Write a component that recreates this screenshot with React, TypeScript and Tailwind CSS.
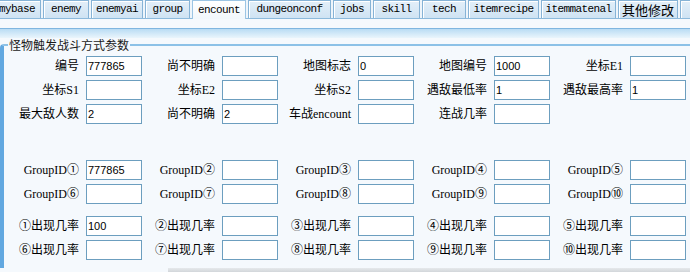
import React from "react";

const tabs: { t: string; w: number; active?: boolean; cjk?: boolean }[] = [
  { t: "mybase", w: 48 },
  { t: "enemy", w: 46 },
  { t: "enemyai", w: 52 },
  { t: "group", w: 45 },
  { t: "encount", w: 54, active: true },
  { t: "dungeonconf", w: 83 },
  { t: "jobs", w: 38 },
  { t: "skill", w: 47 },
  { t: "tech", w: 44 },
  { t: "itemrecipe", w: 71 },
  { t: "itemmatenal", w: 75 },
  { t: "其他修改", w: 60, cjk: true },
  { t: "", w: 40 },
];

type Cell = [string, string] | null;

const sec1: Cell[][] = [
  [["编号", "777865"], ["尚不明确", ""], ["地图标志", "0"], ["地图编号", "1000"], ["坐标E1", ""]],
  [["坐标S1", ""], ["坐标E2", ""], ["坐标S2", ""], ["遇敌最低率", "1"], ["遇敌最高率", "1"]],
  [["最大敌人数", "2"], ["尚不明确", "2"], ["车战encount", ""], ["连战几率", ""], null],
];

const circ = ["①", "②", "③", "④", "⑤", "⑥", "⑦", "⑧", "⑨", "⑩"];

const sec2: Cell[][] = [
  circ.slice(0, 5).map((c, i) => ["GroupID" + c, i === 0 ? "777865" : ""] as [string, string]),
  circ.slice(5).map((c) => ["GroupID" + c, ""] as [string, string]),
];

const sec3: Cell[][] = [
  circ.slice(0, 5).map((c, i) => [c + "出现几率", i === 0 ? "100" : ""] as [string, string]),
  circ.slice(5).map((c) => [c + "出现几率", ""] as [string, string]),
];

function Row({ cells }: { cells: Cell[] }) {
  return (
    <div className="grid grid-cols-[repeat(5,136px)] h-[20px]">
      {cells.map((c, i) =>
        c ? (
          <div key={i} className="flex items-center">
            <div className="w-[80px] pr-[7px] text-right text-[12px] leading-[20px] text-black whitespace-nowrap [font-family:'Liberation_Serif','Noto_Sans_CJK_SC',serif]">
              {c[0]}
            </div>
            <div className="w-[56px] h-[20px] border border-[#6c9ebf] bg-white pl-[1px] text-[11px] leading-[18px] text-black [font-family:'Liberation_Sans',sans-serif]">
              {c[1]}
            </div>
          </div>
        ) : (
          <div key={i} />
        )
      )}
    </div>
  );
}

export default function App() {
  return (
    <div className="w-[690px] h-[272px] overflow-hidden bg-[#f5f9fd] flex flex-col">
      {/* tab bar */}
      <div className="h-[19px] flex gap-[2px] -ml-[7px] border-b border-[#8dbadc] bg-[#eef5fb] shrink-0">
        {tabs.map((tb, i) => (
          <div
            key={i}
            style={{ width: tb.w }}
            className={
              "shrink-0 h-[18px] flex items-center justify-center border border-b-0 text-black whitespace-nowrap " +
              (tb.active
                ? "bg-gradient-to-b from-[#ffffff] to-[#f1f7fc] border-[#9cc5e4] h-[19px]"
                : "bg-gradient-to-b from-[#e3eff9] to-[#cfe3f3] border-[#86b3d6] shadow-[inset_1px_1px_0_#ffffff]") +
              (tb.cjk
                ? " text-[13px] [font-family:'Noto_Sans_CJK_SC',sans-serif]"
                : " text-[11px] tracking-[-0.6px] [font-family:'Liberation_Mono',monospace]")
            }
          >
            {tb.t}
          </div>
        ))}
      </div>
      <div className="h-[9px] shrink-0" />
      {/* blue band */}
      <div className="h-[10px] shrink-0 border-t border-[#7fb6e0] bg-gradient-to-b from-[#b9dcf4] to-[#eaf5fc]" />
      {/* fieldset */}
      <fieldset className="flex-1 border-t-2 border-l-[4px] border-r-0 border-b-0 border-t-[#8cc1e7] border-l-[#62a8e0] rounded-tl-[4px] pl-[2px] pt-[4px] m-0 min-w-0">
        <legend className="ml-[2px] px-[1px] text-[12px] leading-[14px] text-[#1a1a1a] [font-family:'Noto_Sans_CJK_SC',sans-serif]">
          怪物触发战斗方式参数
        </legend>
        <div className="flex flex-col gap-[4px]">
          {sec1.map((r, i) => (
            <Row key={i} cells={r} />
          ))}
        </div>
        <div className="flex flex-col gap-[4px] mt-[36px]">
          {sec2.map((r, i) => (
            <Row key={i} cells={r} />
          ))}
        </div>
        <div className="flex flex-col gap-[4px] mt-[12px]">
          {sec3.map((r, i) => (
            <Row key={i} cells={r} />
          ))}
        </div>
      </fieldset>
      <div className="h-[4px] shrink-0 ml-[168px] bg-gradient-to-b from-[#e6e9ec] to-[#d2d6da]" />
    </div>
  );
}
